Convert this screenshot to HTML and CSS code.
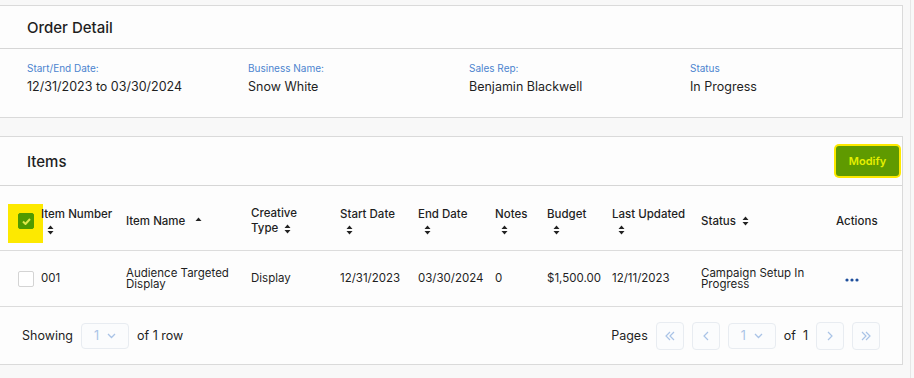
FILE: index.html
```html
<!DOCTYPE html>
<html lang="en">
	<head>
		<meta charset="UTF-8" />
		<title>Order Detail</title>
		<link rel="stylesheet" href="styles.css">
	</head>
	<body>
		<div class="page">
			<!-- order summary -->
			<div class="card">
				<div class="card-head">
					<h2>Order Detail</h2>
				</div>
				<div class="summary">
					<div class="field">
						<div class="label">Start/End Date:</div>
						<div class="value">12/31/2023 to 03/30/2024</div>
					</div>
					<div class="field">
						<div class="label">Business Name:</div>
						<div class="value">Snow White</div>
					</div>
					<div class="field">
						<div class="label">Sales Rep:</div>
						<div class="value">Benjamin Blackwell</div>
					</div>
					<div class="field">
						<div class="label">Status</div>
						<div class="value">In Progress</div>
					</div>
				</div>
			</div>

			<!-- line items -->
			<div class="card">
				<div class="card-head">
					<h2>Items</h2>
					<button class="btn-modify">Modify</button>
				</div>
				<table class="items">
					<colgroup>
						<col style="width:41px">
						<col style="width:85px">
						<col style="width:125px">
						<col style="width:89px">
						<col style="width:78px">
						<col style="width:77px">
						<col style="width:52px">
						<col style="width:65px">
						<col style="width:89px">
						<col style="width:135px">
						<col style="width:66px">
					</colgroup>
					<thead>
						<tr>
							<th class="col-check">
								<span class="marker"></span>
								<span class="check checked">
									<svg width="9" height="7" viewBox="0 0 9 7"><path d="M1 3.5 L3.5 6 L8 1" fill="none" stroke="#dfe84a" stroke-width="2"/></svg>
								</span>
							</th>
							<th>Item Number<svg class="sort block" width="7" height="10" viewBox="0 0 7 10"><path d="M0.5 4 L3.5 0.5 L6.5 4Z M0.5 6 L3.5 9.5 L6.5 6Z"/></svg></th>
							<th>Item Name <svg class="sort-up" width="7" height="4" viewBox="0 0 7 4"><path d="M0.5 4 L3.5 0.5 L6.5 4Z"/></svg></th>
							<th>Creative<br>Type <svg class="sort" width="7" height="10" viewBox="0 0 7 10"><path d="M0.5 4 L3.5 0.5 L6.5 4Z M0.5 6 L3.5 9.5 L6.5 6Z"/></svg></th>
							<th>Start Date<svg class="sort block" width="7" height="10" viewBox="0 0 7 10"><path d="M0.5 4 L3.5 0.5 L6.5 4Z M0.5 6 L3.5 9.5 L6.5 6Z"/></svg></th>
							<th>End Date<svg class="sort block" width="7" height="10" viewBox="0 0 7 10"><path d="M0.5 4 L3.5 0.5 L6.5 4Z M0.5 6 L3.5 9.5 L6.5 6Z"/></svg></th>
							<th>Notes<svg class="sort block" width="7" height="10" viewBox="0 0 7 10"><path d="M0.5 4 L3.5 0.5 L6.5 4Z M0.5 6 L3.5 9.5 L6.5 6Z"/></svg></th>
							<th>Budget<svg class="sort block" width="7" height="10" viewBox="0 0 7 10"><path d="M0.5 4 L3.5 0.5 L6.5 4Z M0.5 6 L3.5 9.5 L6.5 6Z"/></svg></th>
							<th>Last Updated<svg class="sort block" width="7" height="10" viewBox="0 0 7 10"><path d="M0.5 4 L3.5 0.5 L6.5 4Z M0.5 6 L3.5 9.5 L6.5 6Z"/></svg></th>
							<th>Status <svg class="sort" width="7" height="10" viewBox="0 0 7 10"><path d="M0.5 4 L3.5 0.5 L6.5 4Z M0.5 6 L3.5 9.5 L6.5 6Z"/></svg></th>
							<th>Actions</th>
						</tr>
					</thead>
					<tbody>
						<tr>
							<td class="col-check"><span class="check"></span></td>
							<td>001</td>
							<td class="tight">Audience Targeted Display</td>
							<td>Display</td>
							<td>12/31/2023</td>
							<td>03/30/2024</td>
							<td>0</td>
							<td>$1,500.00</td>
							<td>12/11/2023</td>
							<td class="tight">Campaign Setup In Progress</td>
							<td>
								<svg class="dots" width="14" height="4" viewBox="0 0 14 4"><circle cx="2" cy="2" r="1.6"/><circle cx="7" cy="2" r="1.6"/><circle cx="12" cy="2" r="1.6"/></svg>
							</td>
						</tr>
					</tbody>
				</table>
				<div class="pager">
					<div class="pager-side">
						<span>Showing</span>
						<div class="select">1 <svg width="9" height="6" viewBox="0 0 9 6"><path d="M1 1 L4.5 4.5 L8 1" fill="none" stroke="#a9c3e6" stroke-width="1.3"/></svg></div>
						<span>of 1 row</span>
					</div>
					<div class="pager-side">
						<span>Pages</span>
						<div class="pg-btn"><svg width="12" height="10" viewBox="0 0 12 10"><path d="M6 1 L2 5 L6 9 M10 1 L6 5 L10 9" fill="none" stroke="#a9c3e6" stroke-width="1.2"/></svg></div>
						<div class="pg-btn"><svg width="8" height="10" viewBox="0 0 8 10"><path d="M6 1 L2 5 L6 9" fill="none" stroke="#a9c3e6" stroke-width="1.2"/></svg></div>
						<div class="select">1 <svg width="9" height="6" viewBox="0 0 9 6"><path d="M1 1 L4.5 4.5 L8 1" fill="none" stroke="#a9c3e6" stroke-width="1.3"/></svg></div>
						<span>of &nbsp;1</span>
						<div class="pg-btn"><svg width="8" height="10" viewBox="0 0 8 10"><path d="M2 1 L6 5 L2 9" fill="none" stroke="#a9c3e6" stroke-width="1.2"/></svg></div>
						<div class="pg-btn"><svg width="12" height="10" viewBox="0 0 12 10"><path d="M2 1 L6 5 L2 9 M6 1 L10 5 L6 9" fill="none" stroke="#a9c3e6" stroke-width="1.2"/></svg></div>
					</div>
				</div>
			</div>
		</div>
	</body>
</html>
```

FILE: styles.css
```css
body {
	margin: 0;
	background: #f8f8f8;
	font-family: Inter, "Open Sans", sans-serif;
	color: #1f1f1f;
}
.page {
	width: 911px;
	height: 378px;
	box-sizing: border-box;
	padding-top: 5px;
	border-right: 1px solid #e6e6e6;
}
.card {
	width: 903px;
	box-sizing: border-box;
	background: #fdfdfd;
	border: 1px solid #dadada;
	border-left: none;
	margin-bottom: 18px;
}
.card-head {
	display: flex;
	align-items: center;
	justify-content: space-between;
	height: 42px;
	padding: 0 3px 0 27px;
	border-bottom: 1px solid #d6d6d6;
}
.card + .card .card-head {
	height: 48px;
}
h2 {
	margin: 0;
	font-size: 15px;
	font-weight: 500;
}
.summary {
	display: grid;
	grid-template-columns: repeat(4, 221px);
	padding: 12px 27px 21px;
}
.label {
	font-size: 10px;
	line-height: 14px;
	color: #4c84cf;
}
.value {
	margin-top: 3px;
	font-size: 12.5px;
	line-height: 18px;
}
.btn-modify {
	width: 63px;
	height: 30px;
	border: none;
	border-radius: 3px;
	background: #5f9a00;
	color: #e6f000;
	font-family: inherit;
	font-size: 11px;
	font-weight: 600;
	box-shadow: 0 0 0 2px #fde900;
}
.items {
	width: 902px;
	table-layout: fixed;
	border-collapse: separate;
	border-spacing: 0;
}
.items th,
.items td {
	padding: 0 4px 0 0;
	text-align: left;
	vertical-align: middle;
	border-bottom: 1px solid #dcdcdc;
}
.items th {
	position: relative;
	height: 58px;
	padding-top: 6px;
	font-size: 11.5px;
	font-weight: 500;
	line-height: 15px;
}
.items td {
	height: 55px;
	font-size: 11.5px;
	line-height: 15px;
}
.items td.tight {
	line-height: 11px;
}
.col-check {
	position: relative;
	padding-left: 18px !important;
}
.marker {
	position: absolute;
	left: 8px;
	top: 18px;
	width: 35px;
	height: 39px;
	background: #fde900;
}
.check {
	position: relative;
	display: flex;
	align-items: center;
	justify-content: center;
	width: 14px;
	height: 14px;
	border: 1px solid #d4d4d4;
	border-radius: 2px;
	background: #fff;
}
.check.checked {
	border-color: #4f9a00;
	background: #4f9a00;
}
.sort,
.sort-up {
	fill: #222;
	vertical-align: middle;
	margin-left: 3px;
}
.sort-up {
	margin-left: 7px;
	vertical-align: 4px;
}
.sort.block {
	display: block;
	margin: 3px 0 0 6px;
}
.dots {
	fill: #1f4f9c;
	margin-left: 9px;
}
.pager {
	display: flex;
	align-items: center;
	justify-content: space-between;
	height: 57px;
	padding: 0 22px;
	font-size: 12.5px;
}
.pager-side {
	display: flex;
	align-items: center;
	gap: 8px;
}
.select {
	display: flex;
	align-items: center;
	justify-content: center;
	gap: 8px;
	width: 48px;
	height: 26px;
	box-sizing: border-box;
	border: 1px solid #e8ecf1;
	border-radius: 4px;
	background: #fbfcfd;
	color: #a9c3e6;
	font-size: 12.5px;
}
.pg-btn {
	display: flex;
	align-items: center;
	justify-content: center;
	width: 28px;
	height: 28px;
	box-sizing: border-box;
	border: 1px solid #e8ecf1;
	border-radius: 4px;
	background: #fbfcfd;
}
```
